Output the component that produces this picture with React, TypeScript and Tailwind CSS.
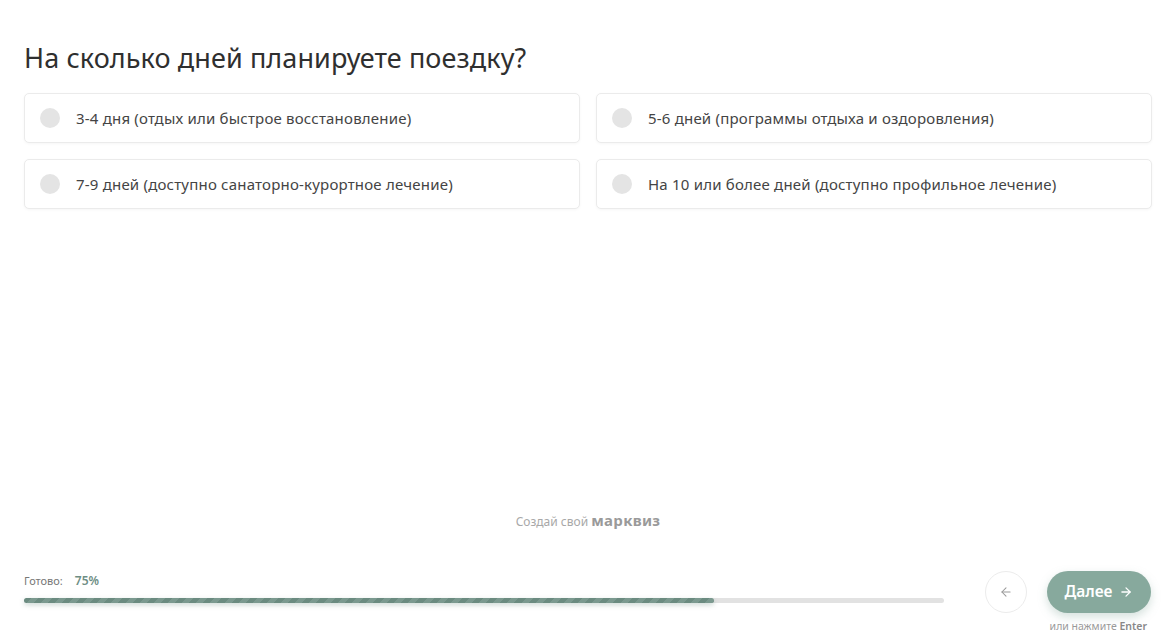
import React from "react";

const options = [
  "3-4 дня (отдых или быстрое восстановление)",
  "5-6 дней (программы отдыха и оздоровления)",
  "7-9 дней (доступно санаторно-курортное лечение)",
  "На 10 или более дней (доступно профильное лечение)",
];

export default function App() {
  return (
    <div className="h-[633px] w-full bg-white flex flex-col px-6 font-['Noto_Sans',sans-serif] text-[#333]">
      <h1 className="mt-[42px] text-[27px] leading-[32px] text-[#2f2f2f] font-normal tracking-[0.1px]">
        На сколько дней планируете поездку?
      </h1>
      <div className="mt-[19px] grid grid-cols-2 gap-x-[16px] gap-y-[16px]">
        {options.map((o) => (
          <div
            key={o}
            className="h-[50px] flex items-center gap-4 px-[15px] rounded-[5px] border border-[#ebebeb] bg-white shadow-[0_1px_3px_rgba(0,0,0,0.04)]"
          >
            <div className="w-5 h-5 rounded-full bg-[#e4e4e4] shrink-0" />
            <span className="text-[15px] text-[#444] tracking-[0.2px]">{o}</span>
          </div>
        ))}
      </div>
      <div className="mt-auto flex flex-col">
        <div className="text-center text-[12px] text-[#a8a8a8] leading-4">
          Создай свой{" "}
          <span className="text-[15px] font-bold text-[#9a9a9a] tracking-[0.3px]">марквиз</span>
        </div>
        <div className="mt-[41px] flex items-start">
          <div className="flex-1 pt-[3px] pr-[41px]">
            <div className="flex items-center gap-3 text-[11px] leading-[14px]">
              <span className="text-[#777]">Готово:</span>
              <span className="text-[#6e8e84] font-semibold text-[12px]">75%</span>
            </div>
            <div className="mt-[10px] h-[5px] rounded-full bg-[#e2e2e2]">
              <div className="h-[5px] w-3/4 rounded-full bg-[repeating-linear-gradient(135deg,#6b8b80_0px,#6b8b80_5px,#7b998f_5px,#7b998f_10px)] shadow-[0_2px_5px_rgba(107,139,128,0.35)]" />
            </div>
          </div>
          <div className="flex flex-col items-end">
            <div className="flex items-center gap-5 pr-[1px]">
              <button className="w-[42px] h-[42px] rounded-full border border-[#ececec] bg-white flex items-center justify-center text-[#999]">
                <svg width="14" height="14" viewBox="0 0 24 24" fill="none" stroke="currentColor" strokeWidth="1.8" strokeLinecap="round" strokeLinejoin="round">
                  <path d="M19 12H5" />
                  <path d="M12 19l-7-7 7-7" />
                </svg>
              </button>
              <button className="h-[42px] w-[104px] rounded-full bg-[#87a99d] text-white flex items-center justify-center gap-[7px] shadow-[0_4px_10px_rgba(135,169,157,0.35)]">
                <span className="text-[15.5px] font-semibold">Далее</span>
                <svg width="14" height="14" viewBox="0 0 24 24" fill="none" stroke="currentColor" strokeWidth="2.2" strokeLinecap="round" strokeLinejoin="round">
                  <path d="M5 12h14" />
                  <path d="M12 5l7 7-7 7" />
                </svg>
              </button>
            </div>
            <div className="mt-[6px] pr-[5px] text-[10.5px] leading-[14px] text-[#9a9a9a]">
              или нажмите <span className="font-semibold text-[#888]">Enter</span>
            </div>
          </div>
        </div>
      </div>
    </div>
  );
}
